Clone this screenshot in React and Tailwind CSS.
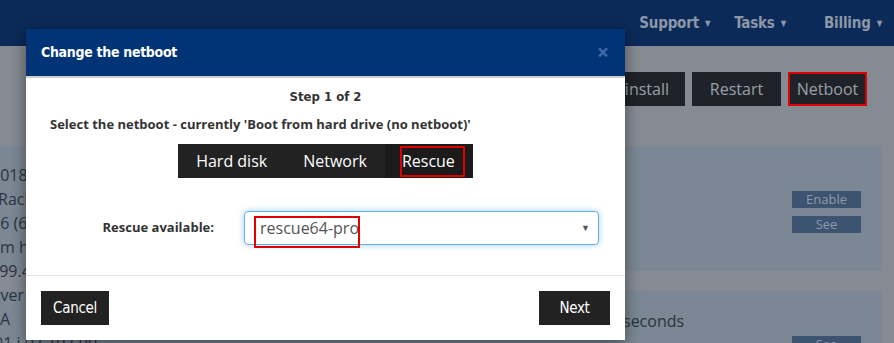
const narrow = { fontFamily: '"DejaVu Sans Condensed", "Open Sans", sans-serif' }

function NavItem({ label }) {
  return (
    <span className="flex items-center gap-[6px] font-bold text-[15px] tracking-[-0.2px] text-[#8d97a8]" style={narrow}>
      {label}
      <span className="text-[8px] mt-[1px]">▼</span>
    </span>
  )
}

function SmallBtn({ children }) {
  return <div className="w-[69px] h-[17px] bg-[#3d5470] text-[#8e9aab] text-[13px] leading-[17px] text-center">{children}</div>
}

function Page() {
  // text of the server details column, mostly hidden behind the modal
  const leftLines = [
    { t: '2018', ml: '-ml-[9px]' },
    { t: 'Rack:', ml: '-ml-[2px]' },
    { t: '86 (64', ml: '-ml-[9px]' },
    { t: 'm h', ml: 'ml-0' },
    { t: '199.42', ml: '-ml-[10px]' },
    { t: 'rver -', ml: '-ml-[6px]' },
    { t: 'A', ml: 'ml-0' },
    { t: '01 i 07.107.00', ml: '-ml-[6px]' },
  ]

  return (
    <div className="w-[894px] h-[343px] overflow-hidden bg-[#868a92] text-[#2c343e]" style={{ fontFamily: '"Open Sans", sans-serif' }}>
      {/* top nav */}
      <div className="h-[46px] bg-[#0b2a58] flex items-center justify-end pr-[12px] gap-[24px]">
        <NavItem label="Support" />
        <NavItem label="Tasks" />
        <span className="ml-[14px]"><NavItem label="Billing" /></span>
      </div>

      {/* action buttons */}
      <div className="flex justify-end gap-[7px] pr-[27px] mt-[26px]">
        <div className="h-[34px] px-[16px] bg-[#1f2329] text-[#9aa0a8] text-[16px] flex items-center">Reinstall</div>
        <div className="h-[34px] w-[89px] bg-[#1f2329] text-[#9aa0a8] text-[16px] flex items-center justify-center">Restart</div>
        <div className="h-[34px] w-[79px] bg-[#1f2329] text-[#9aa0a8] text-[16px] flex items-center justify-center border-2 border-[#e00000]">Netboot</div>
      </div>

      <div className="mt-[40px] grid">
        <div className="col-start-1 row-start-1 mr-[12px] flex flex-col gap-[20px]">
          {/* panel 1 */}
          <div className="h-[125px] bg-[#7b8794] flex justify-end">
            <div className="mr-[21px] pt-[45px] flex flex-col gap-[8px]">
              <SmallBtn>Enable</SmallBtn>
              <SmallBtn>See</SmallBtn>
            </div>
          </div>
          {/* panel 2 */}
          <div className="h-[80px] bg-[#7b8794] flex">
            <div className="pl-[623px] pt-[19px] text-[16px] leading-[22px]">seconds</div>
            <div className="ml-auto mr-[21px] pt-[45px]">
              <SmallBtn>See</SmallBtn>
            </div>
          </div>
        </div>

        <div className="col-start-1 row-start-1 flex flex-col items-start pt-[17px] text-[16px] leading-[24px] whitespace-nowrap">
          {leftLines.map((l) => (
            <span key={l.t} className={l.ml}>{l.t}</span>
          ))}
        </div>
      </div>
    </div>
  )
}

function NetbootModal() {
  return (
    <div className="absolute left-[26px] top-[29px] w-[599px] h-[311px] bg-white shadow-[0_4px_14px_rgba(0,0,0,0.45)] flex flex-col text-[#333]" style={{ fontFamily: '"Open Sans", sans-serif' }}>
      <div className="h-[49px] bg-[#003476] border-b-2 border-[#cfcfcf] flex items-center justify-between px-[15px]">
        <h3 className="text-white font-bold text-[14px] tracking-[-0.3px]" style={narrow}>Change the netboot</h3>
        <span className="text-[#3f6aa6] font-bold text-[21px] leading-none mr-[1px]">×</span>
      </div>

      <div className="pt-[9px] px-[24px]">
        <p className="text-center font-bold text-[13px] leading-[20px]" style={narrow}>Step 1 of 2</p>
        <p className="mt-[7px] font-bold text-[13px] leading-[20px]">Select the netboot - currently 'Boot from hard drive (no netboot)'</p>

        <div className="mt-[10px] flex justify-center">
          <div className="flex h-[34px] bg-[#222] text-white text-[16px]">
            <span className="px-[18px] flex items-center">Hard disk</span>
            <span className="px-[18px] flex items-center">Network</span>
            <span className="pl-[17px] pr-[18px] flex items-center bg-[#1b1b1b] relative">
              Rescue
              <span className="absolute left-[15px] right-[8px] top-[2px] bottom-[1px] border-2 border-[#e00000]" />
            </span>
          </div>
        </div>

        <div className="mt-[33px] flex items-center">
          <label className="w-[164px] text-right font-bold text-[13px]">Rescue available:</label>
          <div className="ml-[30px] flex-1 mr-[2px] h-[34px] rounded-[4px] border border-[#66afe9] shadow-[0_0_6px_rgba(102,175,233,0.6)] flex items-center justify-between pl-[15px] pr-[8px] relative">
            <span className="text-[16px] text-[#555]">rescue64-pro</span>
            <span className="absolute left-[9px] top-[4px] w-[106px] h-[32px] border-2 border-[#e00000]" />
            <span className="text-[9px] text-[#555]">▼</span>
          </div>
        </div>
      </div>

      <div className="mt-[30px] border-t border-[#e5e5e5] flex justify-between px-[15px] pt-[15px]">
        <button className="h-[34px] w-[68px] bg-[#222] text-white text-[15px] tracking-[-0.3px]" style={narrow}>Cancel</button>
        <button className="h-[34px] w-[71px] bg-[#222] text-white text-[15px] tracking-[-0.3px]" style={narrow}>Next</button>
      </div>
    </div>
  )
}

export default function App() {
  return (
    <div className="relative w-[894px] h-[343px] overflow-hidden">
      <Page />
      <NetbootModal />
    </div>
  )
}
